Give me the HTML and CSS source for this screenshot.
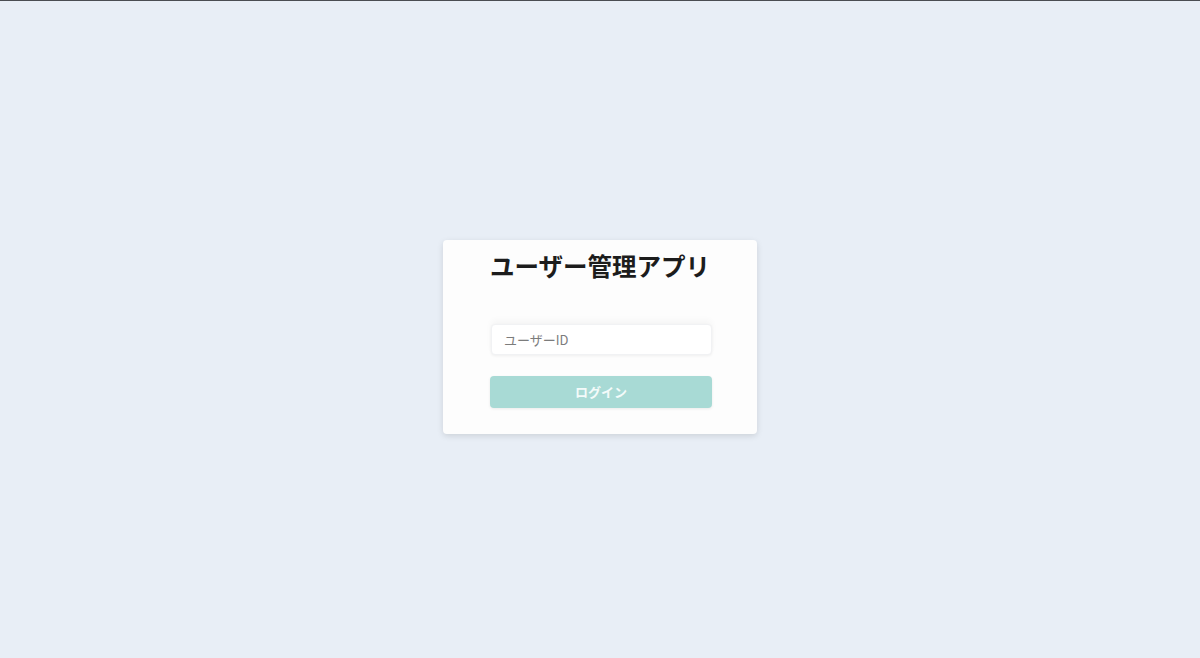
FILE: index.html
```html
<!DOCTYPE html>
<html lang="ja">
<head>
    <meta charset="UTF-8">
    <meta name="viewport" content="width=device-width, initial-scale=1.0">
    <title>ユーザー管理アプリ</title>
    <link rel="stylesheet" href="styles.css">
</head>
<body>
    <div class="login-card">
        <h1 class="login-title">ユーザー管理アプリ</h1>
        <form class="login-form">
            <input type="text" class="login-input" placeholder="ユーザーID">
            <button type="button" class="login-button" disabled>ログイン</button>
        </form>
    </div>
</body>
</html>
```

FILE: styles.css
```css
html {
    border-top: 1px solid #4a4d52;
}

body {
    margin: 0;
    min-height: 657px;
    background-color: #e8eef6;
    font-family: 'Noto Sans CJK JP', 'Noto Sans', sans-serif;
    display: flex;
    justify-content: center;
    align-items: center;
}

.login-card {
    width: 220px;
    padding: 8px 47px 26px;
    background-color: #fdfdfd;
    border-radius: 4px;
    box-shadow: 0 2px 6px rgba(0, 0, 0, 0.12);
    margin-top: 14px;
}

.login-title {
    margin: 0;
    font-size: 24.5px;
    line-height: 36px;
    font-weight: bold;
    color: #1c1c1c;
    text-align: center;
    white-space: nowrap;
}

.login-form {
    display: flex;
    flex-direction: column;
    gap: 21px;
    margin-top: 40px;
}

.login-input {
    box-sizing: border-box;
    width: 221px;
    height: 31px;
    margin-left: 1px;
    padding: 0 12px;
    border: 1px solid #f1f2f4;
    border-radius: 4px;
    box-shadow: 0 -4px 6px rgba(0, 0, 0, 0.03), 0 1px 3px rgba(0, 0, 0, 0.06);
    font-family: inherit;
    font-size: 13px;
    color: #333;
    outline: none;
}

.login-input::placeholder {
    color: #7c7c7c;
}

.login-button {
    height: 32px;
    width: 222px;
    border: none;
    border-radius: 4px;
    background-color: #a8dad5;
    color: #f4fbfa;
    font-family: inherit;
    font-size: 13px;
    font-weight: bold;
    box-shadow: 0 1px 3px rgba(0, 0, 0, 0.08);
}
```
